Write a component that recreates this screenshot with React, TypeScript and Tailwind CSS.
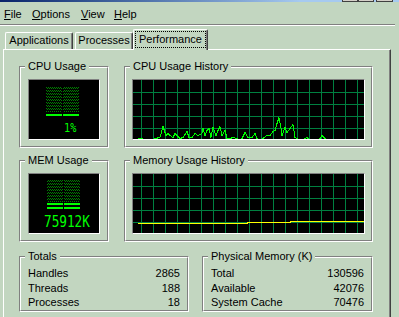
import React from "react";

type GBProps = {
  title: string;
  className: string;
  innerClass: string;
  children?: React.ReactNode;
};

function GroupBox({ title, className, innerClass, children }: GBProps) {
  return (
    <div
      className={`relative border border-t-[#808080] border-l-[#808080] border-r-white border-b-white ${className}`}
    >
      <div
        className={`h-full border border-t-white border-l-white border-r-[#808080] border-b-[#808080] ${innerClass}`}
      >
        {children}
      </div>
      <div className="absolute left-[5px] top-[-7px] px-[3px] bg-[#c2d6c0] leading-[13px] whitespace-nowrap">
        {title}
      </div>
    </div>
  );
}

const cpuPts: [number, number][] = [
  [133, 141], [138, 141], [139, 138], [142, 138], [143, 141], [154, 141], [155, 138],
  [160, 137], [163, 126], [166, 135], [168, 133], [170, 135], [173, 137], [175, 133],
  [177, 135], [180, 138], [183, 137], [187, 131], [189, 137], [192, 137], [195, 133],
  [198, 135], [202, 133], [203, 128], [205, 135], [207, 130], [209, 128], [211, 137],
  [213, 127], [216, 135], [218, 130], [220, 126], [222, 135], [225, 130], [227, 138],
  [230, 138], [233, 137], [237, 138], [240, 141], [242, 138], [245, 132], [248, 137],
  [252, 137], [255, 133], [257, 138], [260, 141], [263, 138], [267, 135], [270, 135],
  [273, 131], [275, 130], [277, 123], [279, 117], [281, 127], [282, 135], [285, 127],
  [287, 132], [290, 128], [293, 124], [295, 137], [297, 138], [300, 141], [304, 141],
  [305, 138], [307, 137], [308, 138], [310, 141], [318, 141], [320, 138], [322, 135],
  [325, 138], [327, 141], [364, 141],
];

const vLines = Array.from({ length: 19 }, (_, i) => 141.5 + i * 12);

function Grid({ top, hLines }: { top: number; hLines: number[] }) {
  return (
    <g stroke="#008040" strokeWidth={1}>
      {vLines.map((x) => (
        <line key={`v${x}`} x1={x} y1={top} x2={x} y2={top + 60} />
      ))}
      {hLines.map((y) => (
        <line key={`h${y}`} x1={133} y1={y + 0.5} x2={364} y2={y + 0.5} />
      ))}
    </g>
  );
}

function DotsPattern({ id }: { id: string }) {
  return (
    <defs>
      <pattern id={id} width="2" height="3" patternUnits="userSpaceOnUse">
        <rect x="0" y="0" width="1" height="1" fill="#008000" />
        <rect x="1" y="1" width="1" height="1" fill="#008000" />
      </pattern>
    </defs>
  );
}

const display =
  "bg-black border border-t-[#808080] border-l-[#808080] border-r-white border-b-white";

export default function App() {
  return (
    <div className="w-[399px] h-[317px] overflow-hidden bg-[#c2d6c0] font-['Liberation_Sans',Arial,sans-serif] text-[11px] leading-[13px] text-black">
      {/* title bar remnant */}
      <div className="flex h-[2px]">
        <div className="w-[300px] h-full bg-linear-to-r from-[#0a246a] to-[#a6caf0]" />
        <div className="flex-1 h-full bg-[#a6caf0] flex pl-[42px]">
          <div className="w-[16px] h-full bg-[#d4d0c8] border-x border-b border-[#404040]" />
          <div className="w-[16px] h-full bg-[#d4d0c8] border-x border-b border-[#404040]" />
          <div className="ml-[2px] w-[17px] h-full bg-[#d4d0c8] border-x border-b border-[#404040]" />
        </div>
      </div>

      {/* menu */}
      <div className="h-[22px] flex pl-[4px] pt-[6px]">
        <span className="w-[28px]">
          <span className="underline">F</span>ile
        </span>
        <span className="w-[49px]">
          <span className="underline">O</span>ptions
        </span>
        <span className="w-[33px]">
          <span className="underline">V</span>iew
        </span>
        <span>
          <span className="underline">H</span>elp
        </span>
      </div>
      <div className="w-[395px] h-[1px] bg-[#808080]" />
      <div className="w-[395px] h-[1px] bg-white" />

      {/* tabs + panel */}
      <div className="ml-[3px] mt-[3px]">
        <div className="flex items-end h-[20px] pl-[2px] relative z-10">
          <div className="w-[68px] h-[17px] border-l border-t border-l-white border-t-white border-r border-r-[#404040] shadow-[inset_-1px_0_0_#808080] rounded-t-[2px] flex justify-center leading-[14px]">
            Applications
          </div>
          <div className="ml-[2px] w-[58px] h-[17px] border-l border-t border-l-white border-t-white border-r border-r-[#404040] shadow-[inset_-1px_0_0_#808080] rounded-t-[2px] flex justify-center leading-[14px]">
            Processes
          </div>
          <div className="w-[75px] h-[21px] mb-[-1px] bg-[#c2d6c0] border-l border-t border-l-white border-t-white border-r border-r-[#404040] shadow-[inset_-1px_0_0_#808080] rounded-t-[2px]">
            <div className="ml-[1px] mt-[1px] w-[71px] h-[17px] border border-dotted border-black flex justify-center leading-[14px]">
              Performance
            </div>
          </div>
        </div>

        <div className="w-[388px] h-[268px] border-l border-t border-l-white border-t-white border-r border-r-[#404040] shadow-[inset_-1px_0_0_#808080] pl-[15px] pt-[16px]">
          {/* row 1 */}
          <div className="flex gap-[15px]">
            <GroupBox title="CPU Usage" className="w-[90px] h-[82px]" innerClass="pl-[7px] pt-[11px]">
              <div className={`w-[72px] h-[61px] ${display}`}>
                <svg width="70" height="59" viewBox="29 80 70 59" shapeRendering="crispEdges" className="block">
                  <DotsPattern id="dotsCpu" />
                  <rect x="46" y="87" width="16" height="25" fill="url(#dotsCpu)" />
                  <rect x="63" y="87" width="16" height="25" fill="url(#dotsCpu)" />
                  <rect x="46" y="114" width="16" height="2" fill="#00ff00" />
                  <rect x="63" y="114" width="16" height="2" fill="#00ff00" />
                  <text
                    x="0"
                    y="0"
                    transform="translate(64 132) scale(0.85 1)"
                    fontFamily="DejaVu Sans Mono, monospace"
                    fontSize="12"
                    fill="#00ff00"
                  >
                    1%
                  </text>
                </svg>
              </div>
            </GroupBox>
            <GroupBox title="CPU Usage History" className="w-[249px] h-[82px]" innerClass="pl-[6px] pt-[11px]">
              <div className={`w-[233px] h-[61px] ${display}`}>
                <svg width="231" height="59" viewBox="133 80 231 59" className="block">
                  <g shapeRendering="crispEdges">
                    <Grid top={80} hLines={[92, 104, 116, 128]} />
                  </g>
                  <polyline
                    points={cpuPts.map((p) => `${p[0]},${p[1] + 0.5}`).join(" ")}
                    fill="none"
                    stroke="#00ff00"
                    strokeWidth={1}
                    shapeRendering="crispEdges"
                  />
                </svg>
              </div>
            </GroupBox>
          </div>

          {/* row 2 */}
          <div className="flex gap-[15px] mt-[12px]">
            <GroupBox title="MEM Usage" className="w-[90px] h-[82px]" innerClass="pl-[7px] pt-[11px]">
              <div className={`w-[72px] h-[61px] ${display}`}>
                <svg width="70" height="59" viewBox="29 174 70 59" shapeRendering="crispEdges" className="block">
                  <DotsPattern id="dotsMem" />
                  <rect x="47" y="180" width="16" height="22" fill="url(#dotsMem)" />
                  <rect x="64" y="180" width="16" height="22" fill="url(#dotsMem)" />
                  <rect x="47" y="203" width="16" height="2" fill="#00ff00" />
                  <rect x="64" y="203" width="16" height="2" fill="#00ff00" />
                  <rect x="47" y="207" width="16" height="2" fill="#00ff00" />
                  <rect x="64" y="207" width="16" height="2" fill="#00ff00" />
                  <text
                    x="0"
                    y="0"
                    transform="translate(44 227) scale(1.06 1.375)"
                    fontFamily="DejaVu Sans Mono, monospace"
                    fontSize="12"
                    fill="#00ff00"
                  >
                    75912K
                  </text>
                </svg>
              </div>
            </GroupBox>
            <GroupBox title="Memory Usage History" className="w-[249px] h-[82px]" innerClass="pl-[6px] pt-[11px]">
              <div className={`w-[233px] h-[61px] ${display}`}>
                <svg width="231" height="59" viewBox="133 174 231 59" shapeRendering="crispEdges" className="block">
                  <Grid top={174} hLines={[186, 198, 210, 222]} />
                  <polyline
                    points="138,223.5 247,223.5 247,222.5 290,222.5 291,221.5 364,221.5"
                    fill="none"
                    stroke="#ffff00"
                    strokeWidth={1}
                  />
                </svg>
              </div>
            </GroupBox>
          </div>

          {/* row 3 */}
          <div className="flex gap-[13px] mt-[14px]">
            <GroupBox title="Totals" className="w-[170px] h-[56px]" innerClass="pl-[7px] pr-[7px] pt-[8px]">
              <div className="flex justify-between h-[15px] leading-[14px]">
                <span>Handles</span>
                <span>2865</span>
              </div>
              <div className="flex justify-between h-[14px] leading-[14px]">
                <span>Threads</span>
                <span>188</span>
              </div>
              <div className="flex justify-between h-[14px] leading-[14px]">
                <span>Processes</span>
                <span>18</span>
              </div>
            </GroupBox>
            <GroupBox title="Physical Memory (K)" className="w-[171px] h-[56px]" innerClass="pl-[7px] pr-[7px] pt-[8px]">
              <div className="flex justify-between h-[15px] leading-[14px]">
                <span>Total</span>
                <span>130596</span>
              </div>
              <div className="flex justify-between h-[14px] leading-[14px]">
                <span>Available</span>
                <span>42076</span>
              </div>
              <div className="flex justify-between h-[14px] leading-[14px]">
                <span>System Cache</span>
                <span>70476</span>
              </div>
            </GroupBox>
          </div>
        </div>
      </div>
    </div>
  );
}
